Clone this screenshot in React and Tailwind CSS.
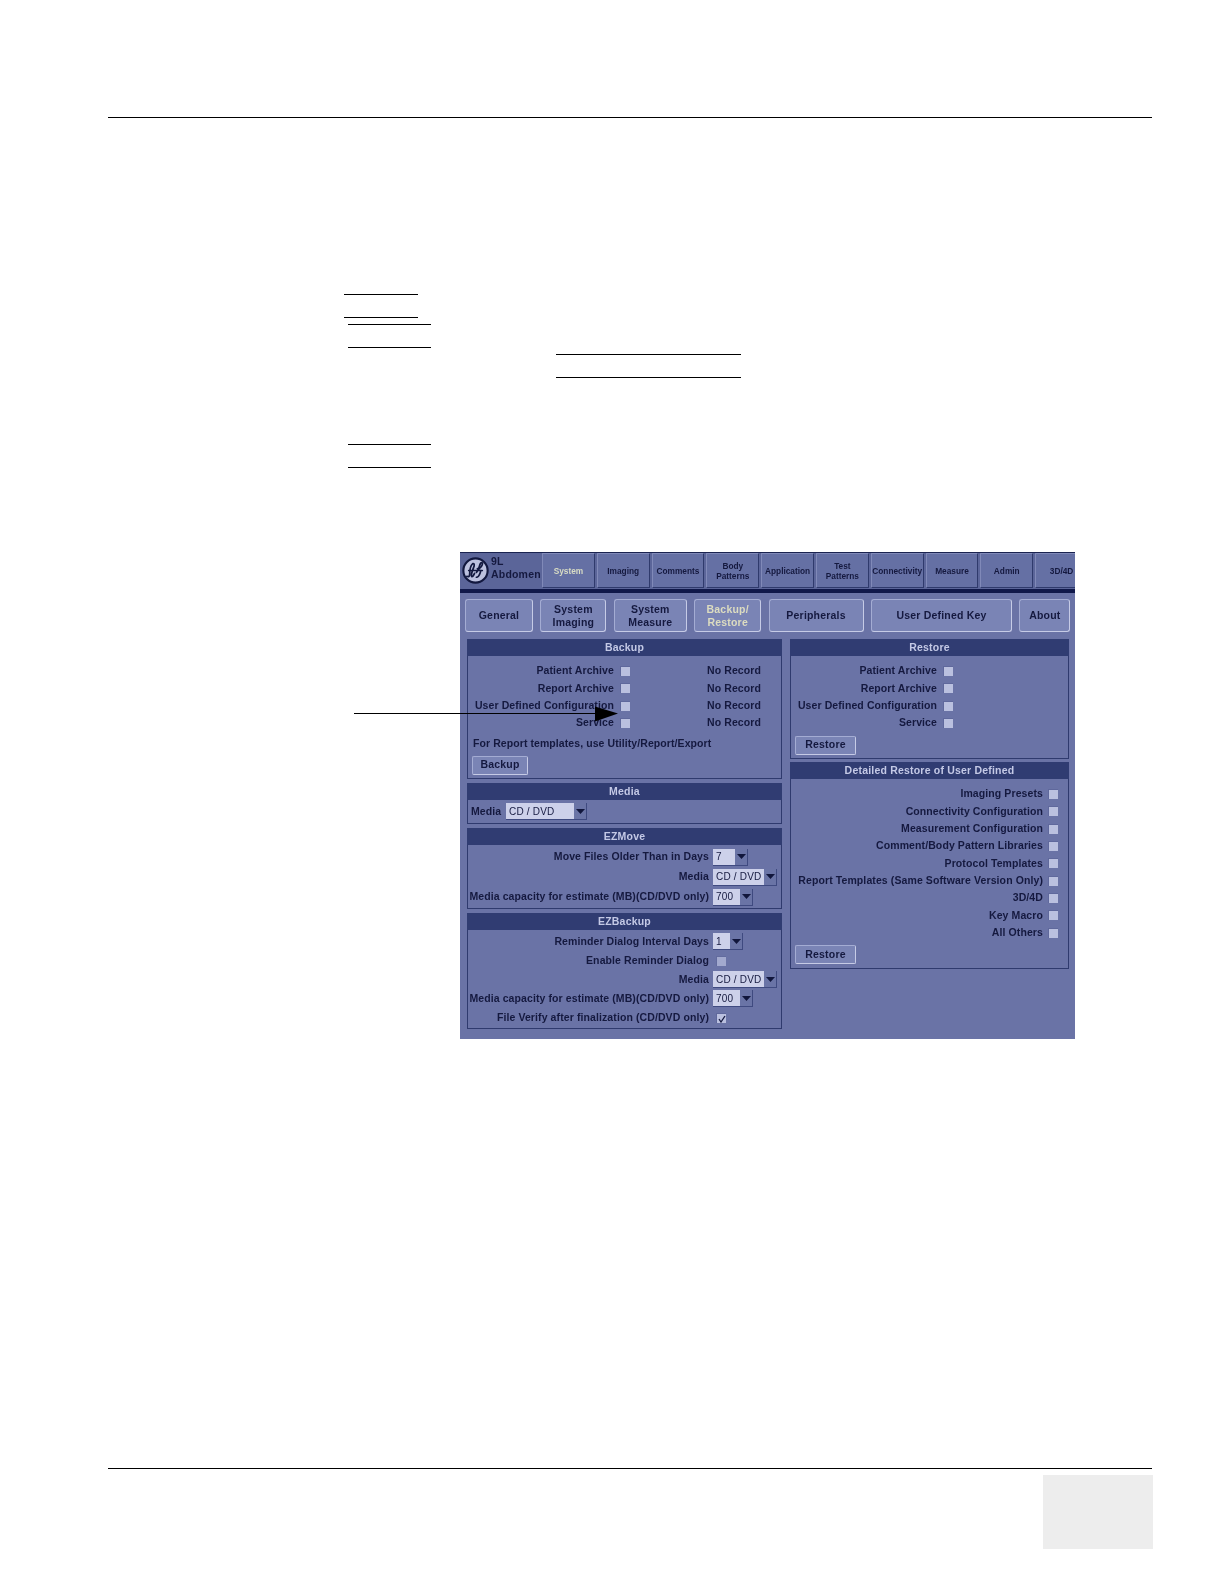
import React from "react";

const F = "[font-family:'Liberation_Sans',Arial,sans-serif]";

const topTabs = [
  ["System", "text-[#d8dcc4]"], ["Imaging"], ["Comments"], ["Body\nPatterns"], ["Application"],
  ["Test\nPatterns"], ["Connectivity"], ["Measure"], ["Admin"], ["3D/4D"],
];
const subTabs = [
  ["General", "w-[68px]"], ["System\nImaging", "w-[66px]"], ["System\nMeasure", "w-[73px]"],
  ["Backup/\nRestore", "w-[67px]", true], ["Peripherals", "w-[95px]"], ["User Defined Key", "w-[141px]"], ["About", "w-[51px]"],
];

function GeLogo() {
  return (
    <svg width="27" height="27" viewBox="0 0 28 28" className="shrink-0">
      <circle cx="14" cy="14" r="12.6" fill="#bcc1df" stroke="#12183f" strokeWidth="2.2" />
      <path d="M11 7c-2 2-3 7-3 10 0 3-1 4-3 3M11 7c2-1 2 2 1 4-1 3-3 7-2 9 1 1 2-1 3-3M15 16c2-2 3-7 4-9 1-2 3-1 2 1-1 3-4 5-5 4M16 14c3-1 4 0 3 2-1 3-2 5-4 5M7 14h14" fill="none" stroke="#12183f" strokeWidth="1.8" strokeLinecap="round" />
    </svg>
  );
}

function Button({ children, w }) {
  return (
    <div className={`${w} h-[19px] flex items-center justify-center bg-[#7a84b5] border-t border-l border-[#a4acd3] border-r border-b border-r-[#c6cbe6] border-b-[#c6cbe6] rounded-[2px] text-[10.5px] font-bold tracking-[0.2px] text-[#15193f]`}>
      {children}
    </div>
  );
}

function Box({ checked, className = "" }) {
  return (
    <div className={`w-[10px] h-[10px] shrink-0 bg-[#bac0df] border-l border-t border-[#5f689c] flex items-center justify-center ${className}`}>
      {checked && (
        <svg width="8" height="8" viewBox="0 0 8 8">
          <path d="M1 4l2 3 4-6" fill="none" stroke="#15193f" strokeWidth="1.3" />
        </svg>
      )}
    </div>
  );
}

function Select({ value, w }) {
  return (
    <div className={`${w} h-[17px] flex bg-[#cdd1ea] border-r border-b border-[#3f4a80] text-[10px] tracking-[0.2px] text-[#15193f]`}>
      <div className="flex-1 pl-[3px] flex items-center whitespace-nowrap overflow-hidden font-medium">{value}</div>
      <div className="w-[12px] shrink-0 bg-[#6a74a6] flex items-center justify-center">
        <svg width="9" height="5" viewBox="0 0 9 5"><path d="M0 0h9L4.5 5z" fill="#11163c" /></svg>
      </div>
    </div>
  );
}

function Panel({ title, h, children, className = "" }) {
  return (
    <div className={`${h} border border-[#2f3a6e] border-t-0 flex flex-col ${className}`}>
      <div className="h-[17px] shrink-0 -mx-px bg-[#303c72] text-center text-[10.5px] leading-[17px] font-bold tracking-[0.2px] text-[#c4c9e6]">{title}</div>
      {children}
    </div>
  );
}

function Row({ label, labelW, children, h = "h-[17.33px]" }) {
  return (
    <div className={`${h} flex items-center shrink-0`}>
      <div className={`${labelW} flex justify-end whitespace-nowrap text-[10.5px] font-bold tracking-[0.1px] text-[#15193f]`}>{label}</div>
      {children}
    </div>
  );
}

const backupRows = ["Patient Archive", "Report Archive", "User Defined Configuration", "Service"];
const detailed = [
  "Imaging Presets", "Connectivity Configuration", "Measurement Configuration", "Comment/Body Pattern Libraries",
  "Protocol Templates", "Report Templates (Same Software Version Only)", "3D/4D", "Key Macro", "All Others",
];

function Screen() {
  return (
    <div className="ml-[460px] w-[615px] h-[487px] bg-[#6a73a6] flex flex-col overflow-hidden border-t border-[#1a2350] blur-[0.35px]">
      <div className="h-[36px] shrink-0 bg-[#5b6599] flex items-start pl-[2px]">
        <div className="h-[35px] flex items-center"><GeLogo /></div>
        <div className="w-[51px] ml-[2px] mt-[2px] shrink-0 text-[10.5px] leading-[13px] font-bold tracking-[0.2px] text-[#15193f] whitespace-nowrap">9L<br />Abdomen</div>
        <div className="flex gap-[2px]">
          {topTabs.map(([t, c]) => (
            <div key={t} className={`w-[52.8px] shrink-0 h-[35px] flex items-center justify-center text-center whitespace-pre-line leading-[10px] text-[8.3px] font-bold bg-[#6570a4] border-t border-l border-[#8089b8] border-r border-b border-r-[#2f3a6c] border-b-[#2f3a6c] ${c || "text-[#15193f]"}`}>{t}</div>
          ))}
        </div>
      </div>
      <div className="h-[4px] shrink-0 bg-[#10184a]" />
      <div className="flex gap-[7.4px] ml-[5px] mt-[6px] h-[33px] shrink-0">
        {subTabs.map(([t, w, active]) => (
          <div key={t} className={`${w} shrink-0 flex items-center justify-center text-center whitespace-pre-line leading-[13px] text-[10.5px] font-bold tracking-[0.2px] rounded-[3px] bg-[#7a84b5] border-t border-l border-[#a4acd3] border-r border-b border-r-[#c6cbe6] border-b-[#c6cbe6] ${active ? "text-[#dcdcc0]" : "text-[#15193f]"}`}>{t}</div>
        ))}
      </div>
      <div className="flex gap-[8px] ml-[7px] mt-[7px]">
        <div className="w-[315px] flex flex-col">
          <Panel title="Backup" h="h-[140px]">
            <div className="pt-[6.5px]">
              {backupRows.map((r) => (
                <Row key={r} label={r} labelW="w-[146px]">
                  <Box className="ml-[6px]" />
                  <div className="ml-[77px] text-[10.5px] font-bold tracking-[0.1px] text-[#15193f] whitespace-nowrap">No Record</div>
                </Row>
              ))}
            </div>
            <div className="ml-[5px] mt-[4px] h-[17px] flex items-center text-[10.5px] font-bold tracking-[0.08px] text-[#15193f] whitespace-nowrap">For Report templates, use Utility/Report/Export</div>
            <div className="ml-[4px] mt-[3px]"><Button w="w-[56px]">Backup</Button></div>
          </Panel>
          <Panel title="Media" h="h-[41px]" className="mt-[4px]">
            <div className="flex items-center h-[23px] pl-[3px]">
              <div className="w-[35px] text-[10.5px] font-bold tracking-[0.1px] text-[#15193f]">Media</div>
              <Select value="CD / DVD" w="w-[81px]" />
            </div>
          </Panel>
          <Panel title="EZMove" h="h-[81px]" className="mt-[4px]">
            <div className="pt-[2px]">
              <Row h="h-[20px]" label="Move Files Older Than in Days" labelW="w-[241px]"><div className="ml-[4px]"><Select value="7" w="w-[35px]" /></div></Row>
              <Row h="h-[20px]" label="Media" labelW="w-[241px]"><div className="ml-[4px]"><Select value="CD / DVD" w="w-[64px]" /></div></Row>
              <Row h="h-[20px]" label="Media capacity for estimate (MB)(CD/DVD only)" labelW="w-[241px]"><div className="ml-[4px]"><Select value="700" w="w-[40px]" /></div></Row>
            </div>
          </Panel>
          <Panel title="EZBackup" h="h-[116px]" className="mt-[4px]">
            <div className="pt-[2px]">
              <Row h="h-[19.15px]" label="Reminder Dialog Interval Days" labelW="w-[241px]"><div className="ml-[4px]"><Select value="1" w="w-[30px]" /></div></Row>
              <Row h="h-[19.15px]" label="Enable Reminder Dialog" labelW="w-[241px]"><Box className="ml-[7px] opacity-70" /></Row>
              <Row h="h-[19.15px]" label="Media" labelW="w-[241px]"><div className="ml-[4px]"><Select value="CD / DVD" w="w-[64px]" /></div></Row>
              <Row h="h-[19.15px]" label="Media capacity for estimate (MB)(CD/DVD only)" labelW="w-[241px]"><div className="ml-[4px]"><Select value="700" w="w-[40px]" /></div></Row>
              <Row h="h-[19.15px]" label="File Verify after finalization (CD/DVD only)" labelW="w-[241px]"><Box checked className="ml-[7px]" /></Row>
            </div>
          </Panel>
        </div>
        <div className="w-[279px] flex flex-col">
          <Panel title="Restore" h="h-[120px]">
            <div className="pt-[6.5px]">
              {backupRows.map((r) => (
                <Row key={r} label={r} labelW="w-[146px]"><Box className="ml-[6px]" /></Row>
              ))}
            </div>
            <div className="ml-[4px] mt-[4px]"><Button w="w-[61px]">Restore</Button></div>
          </Panel>
          <Panel title="Detailed Restore of User Defined" h="h-[207px]" className="mt-[3px]">
            <div className="pt-[6.5px]">
              {detailed.map((r) => (
                <Row key={r} label={r} labelW="w-[252px]"><Box className="ml-[5px]" /></Row>
              ))}
            </div>
            <div className="ml-[4px] mt-[4px]"><Button w="w-[61px]">Restore</Button></div>
          </Panel>
        </div>
      </div>
    </div>
  );
}

function Rule({ ml, w, mt }) {
  return <div className={`${ml} ${w} ${mt} h-px bg-black`} />;
}

export default function App() {
  return (
    <div className={`relative w-[1224px] h-[1584px] bg-white overflow-hidden ${F}`}>
      <div className="h-[117px]" />
      <Rule ml="ml-[108px]" w="w-[1044px]" />
      <Rule ml="ml-[344px]" w="w-[74px]" mt="mt-[176px]" />
      <Rule ml="ml-[344px]" w="w-[74px]" mt="mt-[22px]" />
      <Rule ml="ml-[348px]" w="w-[83px]" mt="mt-[6px]" />
      <Rule ml="ml-[348px]" w="w-[83px]" mt="mt-[22px]" />
      <Rule ml="ml-[556px]" w="w-[185px]" mt="mt-[6px]" />
      <Rule ml="ml-[556px]" w="w-[185px]" mt="mt-[22px]" />
      <Rule ml="ml-[348px]" w="w-[83px]" mt="mt-[66px]" />
      <Rule ml="ml-[348px]" w="w-[83px]" mt="mt-[22px]" />
      <div className="mt-[84px]"><Screen /></div>
      <Rule ml="ml-[108px]" w="w-[1044px]" mt="mt-[429px]" />
      <div className="ml-[1043px] mt-[6px] w-[110px] h-[74px] bg-[#ededed]" />
      <svg className="absolute left-[354px] top-[706px]" width="266" height="16" viewBox="0 0 266 16">
        <path d="M0 7.5h242" stroke="#000" strokeWidth="1" />
        <path d="M241 0.5l23 7-23 8z" fill="#000" />
      </svg>
    </div>
  );
}
